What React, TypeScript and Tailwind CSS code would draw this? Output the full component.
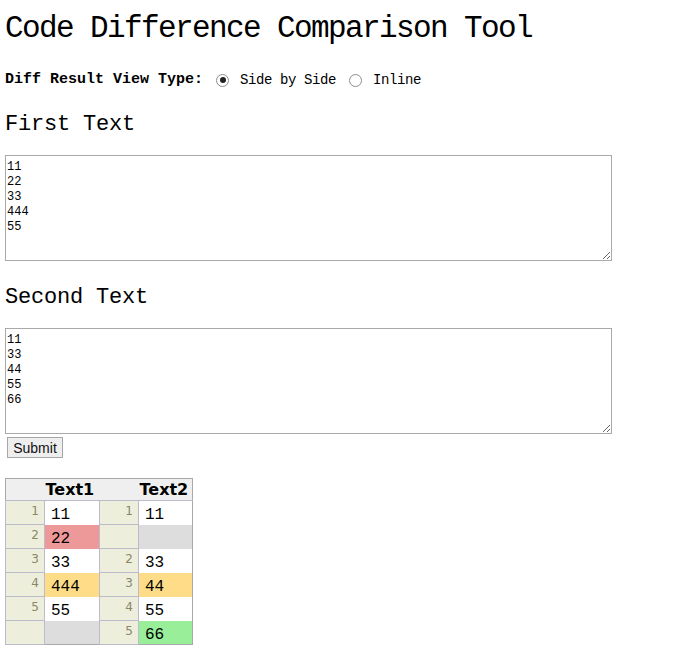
import { useState } from 'react';

type Tone = '' | 'delete' | 'replace' | 'insert' | 'empty';

const toneClass: Record<Tone, string> = {
  '': 'bg-white',
  delete: 'bg-[#ee9999]',
  replace: 'bg-[#ffdd88]',
  insert: 'bg-[#99ee99]',
  empty: 'bg-[#dddddd]',
};

const rows: { l: string; a: string; at: Tone; r: string; b: string; bt: Tone }[] = [
  { l: '1', a: '11', at: '', r: '1', b: '11', bt: '' },
  { l: '2', a: '22', at: 'delete', r: '', b: '', bt: 'empty' },
  { l: '3', a: '33', at: '', r: '2', b: '33', bt: '' },
  { l: '4', a: '444', at: 'replace', r: '3', b: '44', bt: 'replace' },
  { l: '5', a: '55', at: '', r: '4', b: '55', bt: '' },
  { l: '', a: '', at: 'empty', r: '5', b: '66', bt: 'insert' },
];

function Radio({ checked, onClick }: { checked: boolean; onClick: () => void }) {
  return (
    <span
      onClick={onClick}
      className="flex items-center justify-center w-[13px] h-[13px] rounded-full border border-[#8d8d8d] bg-white cursor-pointer"
    >
      {checked && <span className="w-[6px] h-[6px] rounded-full bg-[#222222]" />}
    </span>
  );
}

const lineNum =
  "w-[39px] text-right align-top pt-[3px] pr-[5px] text-[12px] leading-[14px] font-normal text-[#888866] bg-[#eeeedd] border border-[#bbbbcc] font-['DejaVu_Sans',sans-serif]";
const textCell =
  "align-top pt-[6px] px-[6px] text-[16px] leading-[17px] text-black whitespace-pre font-['Liberation_Mono',monospace]";

export default function App() {
  const [view, setView] = useState<'side' | 'inline'>('side');
  const [first, setFirst] = useState('11\n22\n33\n444\n55');
  const [second, setSecond] = useState('11\n33\n44\n55\n66');

  return (
    <div className="pl-[5px] text-black bg-white min-h-[668px] font-['Liberation_Mono',monospace]">
      <h1 className="pt-[10px] text-[31px] leading-[38px] tracking-[-1.6px] font-normal">
        Code Difference Comparison Tool
      </h1>

      <div className="mt-[22px] flex items-center h-[20px]">
        <span className="text-[15px] font-bold">Diff Result View Type:</span>
        <span className="ml-[13px]">
          <Radio checked={view === 'side'} onClick={() => setView('side')} />
        </span>
        <span className="ml-[11px] text-[14px] tracking-[-0.4px]">Side by Side</span>
        <span className="ml-[13px]">
          <Radio checked={view === 'inline'} onClick={() => setView('inline')} />
        </span>
        <span className="ml-[11px] text-[14px] tracking-[-0.4px]">Inline</span>
      </div>

      <h2 className="mt-[21px] text-[22px] leading-[28px] tracking-[-0.2px] font-normal">First Text</h2>
      <textarea
        value={first}
        onChange={e => setFirst(e.target.value)}
        className="block mt-[16px] w-[607px] h-[106px] border border-[#a9a9a9] pt-[4px] pl-[1px] text-[12px] leading-[15px] resize outline-none font-['Liberation_Mono',monospace]"
      />

      <h2 className="mt-[23px] text-[22px] leading-[28px] tracking-[-0.2px] font-normal">Second Text</h2>
      <textarea
        value={second}
        onChange={e => setSecond(e.target.value)}
        className="block mt-[16px] w-[607px] h-[106px] border border-[#a9a9a9] pt-[4px] pl-[1px] text-[12px] leading-[15px] resize outline-none font-['Liberation_Mono',monospace]"
      />
      <button className="block ml-[2px] mt-[3px] w-[56px] h-[21px] border border-[#a6a6a6] bg-[#eeeeee] text-[14px] leading-[18px] text-[#111111] font-['Liberation_Sans',Arial,sans-serif]">
        Submit
      </button>

      <table className="mt-[20px] border-collapse border border-[#a9a9a9] table-fixed w-[187px]">
        <colgroup>
          <col className="w-[39px]" />
          <col className="w-[55px]" />
          <col className="w-[39px]" />
          <col className="w-[54px]" />
        </colgroup>
        <thead className="bg-[#efefef] border-b border-[#bbbbcc] font-['DejaVu_Sans',Verdana,sans-serif]">
          <tr className="h-[22px]">
            <th />
            <th className="text-left px-[1px] text-[16px] leading-[19px] font-bold">Text1</th>
            <th />
            <th className="text-left px-[1px] text-[16px] leading-[19px] font-bold">Text2</th>
          </tr>
        </thead>
        <tbody>
          {rows.map((row, i) => (
            <tr key={i} className="h-[24px]">
              <th className={lineNum}>{row.l}</th>
              <td className={`${textCell} ${toneClass[row.at]}`}>{row.a}</td>
              <th className={lineNum}>{row.r}</th>
              <td className={`${textCell} ${toneClass[row.bt]}`}>{row.b}</td>
            </tr>
          ))}
        </tbody>
      </table>
    </div>
  );
}
